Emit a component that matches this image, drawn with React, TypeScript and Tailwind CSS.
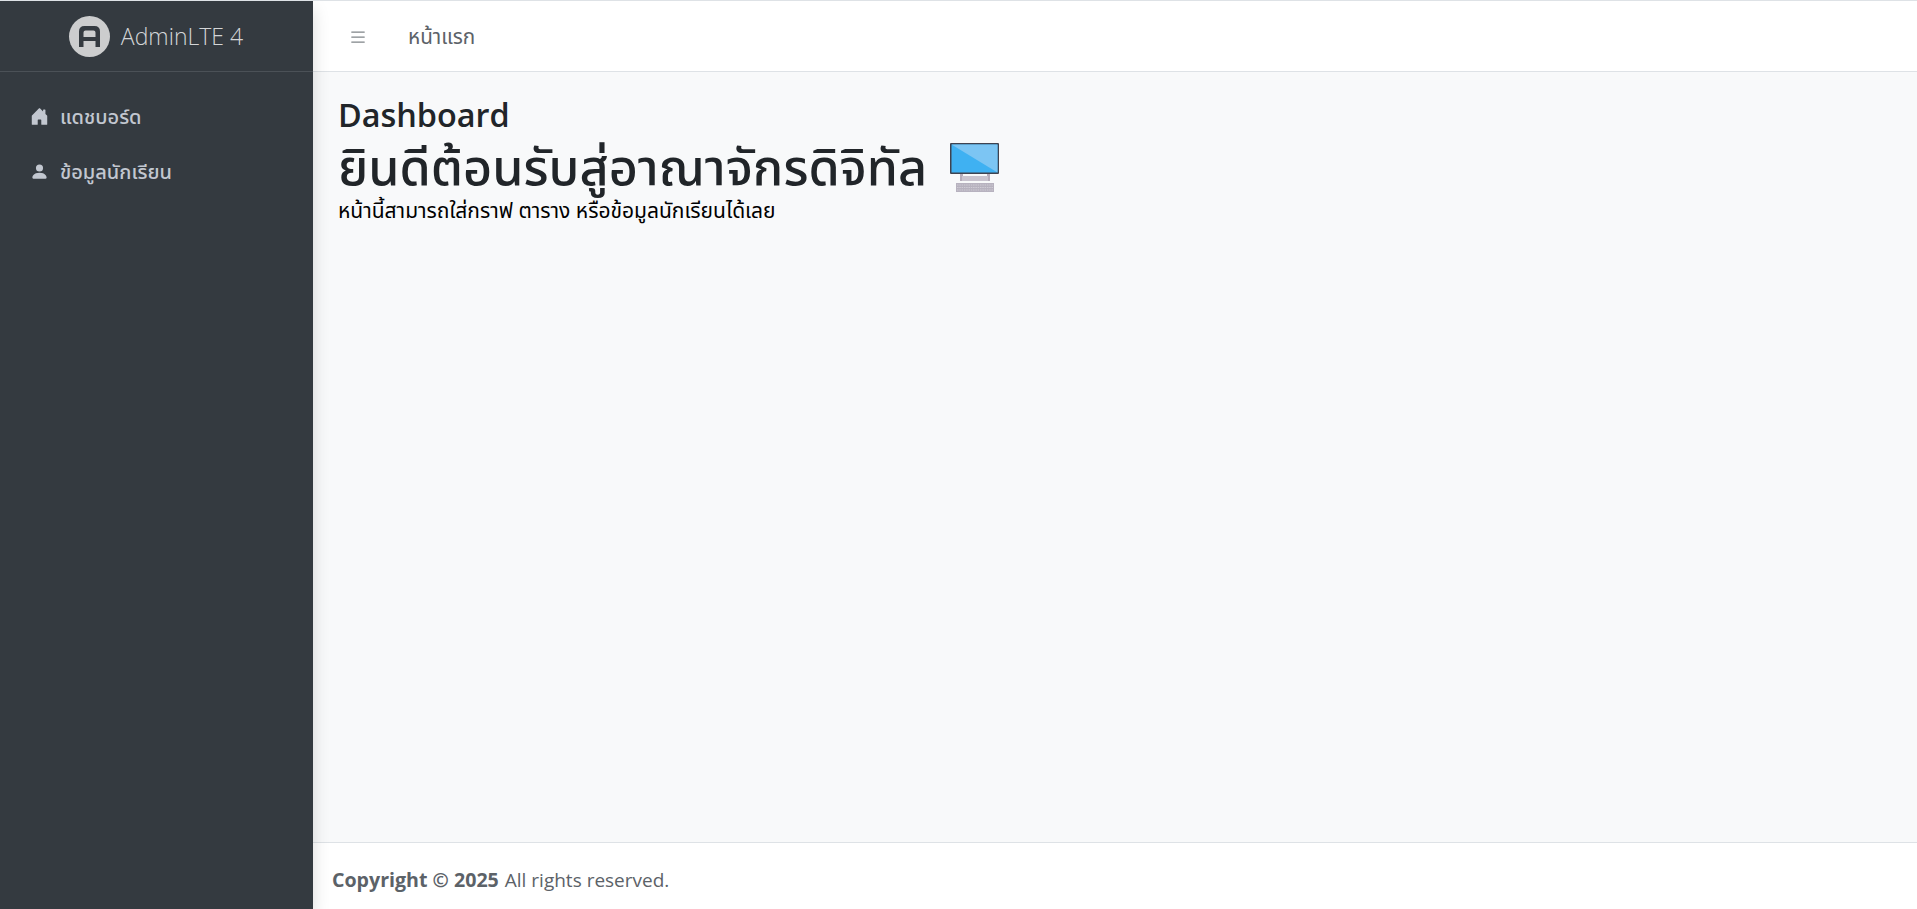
import React from 'react';
import { BsHouseDoorFill, BsPersonFill, BsList } from 'react-icons/bs';

const fontStack = "font-['Open_Sans','Noto_Sans','Noto_Sans_Thai','DejaVu_Sans',sans-serif]";

const Logo = () => (
  <svg width="41" height="41" viewBox="0 0 41 41" className="opacity-80">
    <circle cx="20.5" cy="20.5" r="20.5" fill="#f2f2f2" />
    <path d="M10 31V15.5Q10 10 15.5 10H25.5Q31 10 31 15.5V31H26.5V25H14.5V31ZM14.5 21H26.5V16.5Q26.5 14.5 24.5 14.5H16.5Q14.5 14.5 14.5 16.5Z" fill="#343a40" />
  </svg>
);

const DesktopEmoji = () => (
  <svg width="50" height="50" viewBox="0 0 50 50" className="ml-[10px] inline-block align-[-8px]">
    <rect x="10" y="30" width="3" height="8" fill="#b5adbb" />
    <rect x="37" y="30" width="3" height="8" fill="#b5adbb" />
    <rect x="12" y="33" width="26" height="5" fill="#c9c4cf" />
    <rect x="0" y="0" width="49" height="31" rx="1" fill="#3f4350" />
    <rect x="1.5" y="1.5" width="46" height="28" fill="#3fb1f2" />
    <path d="M1.5 1.5H47.5V29.5Z" fill="#7cc5f3" />
    <rect x="6" y="40" width="38" height="9" fill="#b7b2bf" />
    <path d="M7 42H43M7 44.5H43M7 47H43" stroke="#d6d3da" strokeWidth="0.8" strokeDasharray="1.5 0.8" />
  </svg>
);

const navItems = [
  { label: 'แดชบอร์ด', icon: BsHouseDoorFill },
  { label: 'ข้อมูลนักเรียน', icon: BsPersonFill },
];

export default function App() {
  return (
    <div className={`flex h-[909px] w-full overflow-hidden border-t border-[#dee2e6] bg-[#f8f9fa] ${fontStack}`}>
      <aside className="relative z-10 flex w-[313px] shrink-0 flex-col bg-[#343a40] shadow-[0_8px_16px_rgba(0,0,0,0.15)]">
        <div className="flex h-[71px] items-center justify-center gap-[11px] border-b border-[#4b5157] pr-[1px]">
          <Logo />
          <span className="pt-[1px] text-[23px] font-light text-[#d3d5d7]">AdminLTE 4</span>
        </div>
        <nav className="flex flex-col pt-[17px]">
          {navItems.map((item) => (
            <a key={item.label} className="flex h-[55px] items-center gap-[11px] pl-[30px] text-[20px] font-medium text-[#c2c7d0]">
              <item.icon size={19} />
              <span>{item.label}</span>
            </a>
          ))}
        </nav>
      </aside>

      <div className="flex min-w-0 flex-1 flex-col">
        <header className="flex h-[71px] items-center border-b border-[#dee2e6] bg-white pt-[1px]">
          <BsList size={20} className="ml-[35px] text-[#7f8488]" />
          <span className="ml-[40px] text-[20.7px] text-[#5c6268]">หน้าแรก</span>
        </header>

        <main className="flex-1 px-[25px] pt-[24px] text-[#212529]">
          <h3 className="text-[32.4px] leading-[36px] font-semibold">Dashboard</h3>
          <h1 className="mt-[3px] text-[50.3px] leading-[62px] font-medium">
            ยินดีต้อนรับสู่อาณาจักรดิจิทัล <DesktopEmoji />
          </h1>
          <p className="pt-[1px] text-[21px] leading-[24px] text-black">หน้านี้สามารถใส่กราฟ ตาราง หรือข้อมูลนักเรียนได้เลย</p>
        </main>

        <footer className="flex h-[67px] items-center border-t border-[#dee2e6] bg-white pl-[19px] pt-[8px] text-[19px] text-[#5c6268]">
          <strong className="mr-[6px] text-[19.6px] font-bold">Copyright © 2025</strong> All rights reserved.
        </footer>
      </div>
    </div>
  );
}
